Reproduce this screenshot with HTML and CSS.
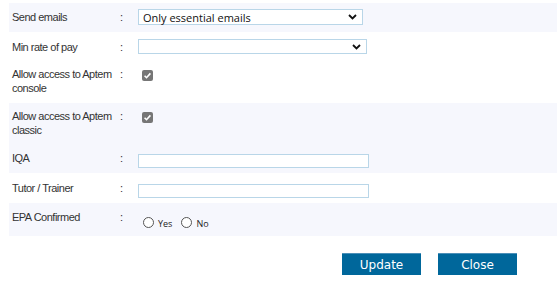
FILE: index.html
```html
<!DOCTYPE html>
<html>
<head>
<meta charset="utf-8">
<link rel="stylesheet" href="styles.css">
</head>
<body>
<div class="form">
  <div class="row alt r1">
    <div class="label">Send emails</div>
    <div class="colon">:</div>
    <div class="value">
      <div class="select s1"><span>Only essential emails</span>
        <svg class="chev" width="9" height="6" viewBox="0 0 9 6"><path d="M1 1 L4.5 4.5 L8 1" fill="none" stroke="#111" stroke-width="1.8"/></svg>
      </div>
    </div>
  </div>
  <div class="row r2">
    <div class="label">Min rate of pay</div>
    <div class="colon">:</div>
    <div class="value">
      <div class="select s2"><span></span>
        <svg class="chev" width="9" height="6" viewBox="0 0 9 6"><path d="M1 1 L4.5 4.5 L8 1" fill="none" stroke="#111" stroke-width="1.8"/></svg>
      </div>
    </div>
  </div>
  <div class="row r3">
    <div class="label">Allow access to Aptem<br>console</div>
    <div class="colon">:</div>
    <div class="value">
      <div class="check"><svg width="11" height="11" viewBox="0 0 11 11"><path d="M2.6 5.8 L4.5 7.7 L8.4 3.4" fill="none" stroke="#fff" stroke-width="1.6"/></svg></div>
    </div>
  </div>
  <div class="row alt r4">
    <div class="label">Allow access to Aptem<br>classic</div>
    <div class="colon">:</div>
    <div class="value">
      <div class="check"><svg width="11" height="11" viewBox="0 0 11 11"><path d="M2.6 5.8 L4.5 7.7 L8.4 3.4" fill="none" stroke="#fff" stroke-width="1.6"/></svg></div>
    </div>
  </div>
  <div class="row alt r5">
    <div class="label">IQA</div>
    <div class="colon">:</div>
    <div class="value"><div class="input"></div></div>
  </div>
  <div class="row r6">
    <div class="label">Tutor / Trainer</div>
    <div class="colon">:</div>
    <div class="value"><div class="input"></div></div>
  </div>
  <div class="row alt r7">
    <div class="label">EPA Confirmed</div>
    <div class="colon">:</div>
    <div class="value radios">
      <span class="radio"></span><span class="rlabel">Yes</span>
      <span class="radio"></span><span class="rlabel">No</span>
    </div>
  </div>
  <div class="buttons">
    <button class="btn">Update</button>
    <button class="btn">Close</button>
  </div>
</div>
</body>
</html>
```
FILE: styles.css
```css
html, body {
  margin: 0;
  padding: 0;
  background: #fff;
}
.form {
  padding: 3px 0 0 9px;
  font-family: "Liberation Sans", Arial, sans-serif;
  font-size: 11px;
  letter-spacing: -0.5px;
  color: #333;
}
.row {
  display: grid;
  grid-template-columns: 108px 18px 1fr;
  align-items: start;
  padding-left: 3px;
  box-sizing: border-box;
}
.row.alt { background: #f6f7fd; }
.r1 { height: 29px; padding-top: 7px; }
.r2 { height: 30px; padding-top: 8px; }
.r3 { height: 41px; padding-top: 5px; }
.r4 { height: 42px; padding-top: 6px; }
.r5 { height: 28px; padding-top: 6px; }
.r6 { height: 30px; padding-top: 8px; }
.r7 { height: 33px; padding-top: 7px; }
.label {
  line-height: 14px;
  white-space: nowrap;
}
.colon { line-height: 14px; }
.value { display: flex; align-items: center; min-height: 14px; }
.select {
  box-sizing: border-box;
  height: 16px;
  border: 1px solid #b9d6e8;
  background: #fff;
  display: flex;
  align-items: center;
  justify-content: space-between;
  padding: 0 4px 0 4px;
  font-family: "Open Sans", sans-serif;
  font-size: 11px;
  letter-spacing: 0;
  color: #111;
  margin-top: -1px;
}
.s1 { width: 225px; }
.s2 { width: 229px; height: 15px; }
.chev { margin-right: 1px; }
.check {
  width: 11px;
  height: 11px;
  border-radius: 2px;
  background: #767676;
  margin-left: 4px;
  margin-top: 2px;
  display: flex;
}
.input {
  box-sizing: border-box;
  width: 231px;
  height: 14px;
  border: 1px solid #b9d6e8;
  background: #fff;
  margin-top: 3px;
}
.radios { padding-top: 4px; }
.radio {
  box-sizing: border-box;
  width: 11px;
  height: 11px;
  border: 1px solid #555;
  border-radius: 50%;
  background: #fff;
  margin-left: 5px;
}
.rlabel {
  font-family: "Open Sans", sans-serif;
  font-size: 9px;
  letter-spacing: 0;
  color: #222;
  margin-left: 4px;
  margin-right: 5px;
  padding-top: 3px;
}
.radio + .rlabel + .radio { margin-left: 4px; }
.buttons {
  display: flex;
  justify-content: flex-end;
  gap: 17px;
  padding: 17px 40px 0 0;
}
.btn {
  width: 79px;
  height: 22px;
  background: #00679b;
  border: none;
  border-top: 1px solid #4b8fb8;
  color: #fff;
  font-family: "DejaVu Sans", sans-serif;
  font-size: 12px;
  letter-spacing: 0;
  padding: 0;
}
```
